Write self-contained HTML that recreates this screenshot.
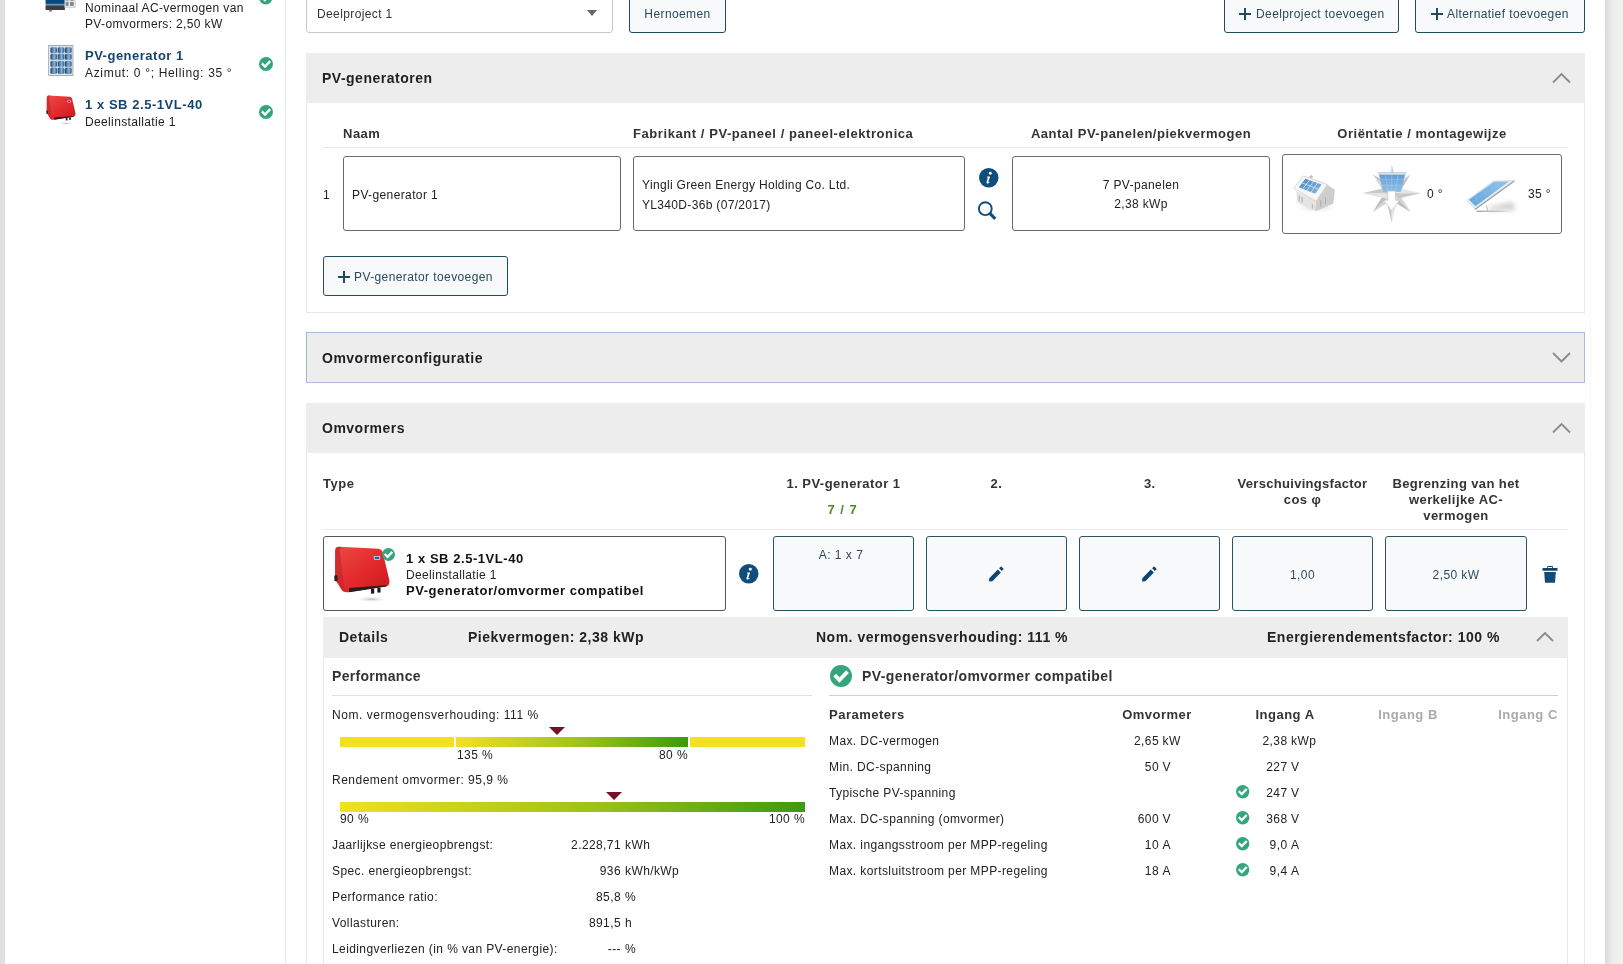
<!DOCTYPE html>
<html><head><meta charset="utf-8"><style>
html,body{margin:0;padding:0;width:1623px;height:964px;overflow:hidden;background:#fff;}
body{position:relative;font-family:"Liberation Sans", sans-serif;}
.t{position:absolute;white-space:nowrap;}
body{-webkit-font-smoothing:antialiased;}
#root{position:absolute;left:0;top:0;width:1623px;height:964px;will-change:transform;}
svg{overflow:visible}
</style></head><body><div id="root">
<div style="position:absolute;left:0px;top:0px;width:5px;height:964px;background:#e0e0e0"></div>
<div style="position:absolute;left:1605px;top:0px;width:18px;height:964px;background:linear-gradient(to right,#d9d9d9,#ececec 40%,#f3f3f3)"></div>
<div style="position:absolute;left:285px;top:0px;width:1px;height:964px;background:#e6e6e6"></div>
<div style="position:absolute;left:1590px;top:50px;width:1px;height:914px;background:#f8f8f8"></div>
<svg style="position:absolute;left:40px;top:0px;" width="40" height="20" viewBox="0 0 1623 812"><rect x="225" y="-200" width="785" height="360" fill="#044a85"/>
<rect x="225" y="160" width="785" height="50" fill="#7393b3"/>
<rect x="225" y="210" width="785" height="200" rx="25" fill="#3a3d41"/>
<rect x="370" y="400" width="110" height="70" fill="#7a7a7a"/>
<rect x="1010" y="-100" width="430" height="400" fill="#e6e9ec" stroke="#c4c8cc" stroke-width="25"/>
<rect x="1040" y="-60" width="120" height="90" fill="#8a96a2"/><rect x="1220" y="-60" width="150" height="90" fill="#8a8a8a"/>
<rect x="1040" y="80" width="120" height="160" fill="#7f8c99"/><rect x="1220" y="80" width="150" height="160" fill="#868686"/></svg>
<div class="t" style="left:85px;top:1.8000000000000007px;font-size:12px;line-height:12px;font-weight:normal;color:#222;letter-spacing:0.36px;">Nominaal AC-vermogen van</div>
<div class="t" style="left:85px;top:17.8px;font-size:12px;line-height:12px;font-weight:normal;color:#222;letter-spacing:0.36px;">PV-omvormers: 2,50 kW</div>
<svg style="position:absolute;left:258.75px;top:-9.25px;" width="13.5" height="13.5" viewBox="0 0 13.5 13.5"><circle cx="6.75" cy="6.75" r="6.75" fill="#35a57d"/><path d="M3.6450000000000005 7.0200000000000005 L5.805 9.180000000000001 L9.99 4.859999999999999" fill="none" stroke="#fff" stroke-width="2.30" stroke-linecap="square"/></svg>
<svg style="position:absolute;left:44px;top:42px;" width="34" height="38" viewBox="0 0 863 964"><defs><linearGradient id="pvg" x1="0" x2="1"><stop offset="0" stop-color="#1d3f66"/><stop offset="0.3" stop-color="#4f7fb0"/><stop offset="0.6" stop-color="#8fb2d4"/><stop offset="1" stop-color="#2a5585"/></linearGradient></defs><rect x="120" y="90" width="615" height="760" fill="#eef1f4" stroke="#9aa0a6" stroke-width="22"/><rect x="155" y="110" width="555" height="710" fill="#c9d6e2"/><rect x="165" y="130" width="165" height="150" rx="40" fill="url(#pvg)"/><rect x="350" y="130" width="165" height="150" rx="40" fill="url(#pvg)"/><rect x="530" y="130" width="170" height="150" rx="40" fill="url(#pvg)"/><rect x="165" y="300" width="165" height="150" rx="40" fill="url(#pvg)"/><rect x="350" y="300" width="165" height="150" rx="40" fill="url(#pvg)"/><rect x="530" y="300" width="170" height="150" rx="40" fill="url(#pvg)"/><rect x="165" y="480" width="165" height="150" rx="40" fill="url(#pvg)"/><rect x="350" y="480" width="165" height="150" rx="40" fill="url(#pvg)"/><rect x="530" y="480" width="170" height="150" rx="40" fill="url(#pvg)"/><rect x="165" y="650" width="165" height="160" rx="40" fill="url(#pvg)"/><rect x="350" y="650" width="165" height="160" rx="40" fill="url(#pvg)"/><rect x="530" y="650" width="170" height="160" rx="40" fill="url(#pvg)"/></svg>
<div class="t" style="left:85px;top:48.95px;font-size:13px;line-height:13px;font-weight:bold;color:#15446c;letter-spacing:0.5px;">PV-generator 1</div>
<div class="t" style="left:85px;top:66.8px;font-size:12px;line-height:12px;font-weight:normal;color:#222;letter-spacing:0.68px;">Azimut: 0 °; Helling: 35 °</div>
<svg style="position:absolute;left:258.5px;top:56.5px;" width="14" height="14" viewBox="0 0 14 14"><circle cx="7.0" cy="7.0" r="7.0" fill="#35a57d"/><path d="M3.7800000000000002 7.28 L6.02 9.520000000000001 L10.36 5.04" fill="none" stroke="#fff" stroke-width="2.38" stroke-linecap="square"/></svg>
<svg style="position:absolute;left:43px;top:92px;" width="38.160000000000004" height="36.04" viewBox="0 0 1021 964"><defs><linearGradient id="rgs" x1="0" x2="1" y1="0" y2="1"><stop offset="0" stop-color="#ee4a44"/><stop offset="0.6" stop-color="#e0262a"/><stop offset="1" stop-color="#c81a20"/></linearGradient>
<radialGradient id="shs"><stop offset="0" stop-color="#bbb"/><stop offset="1" stop-color="#fff" stop-opacity="0"/></radialGradient></defs>
<ellipse cx="620" cy="840" rx="240" ry="45" fill="url(#shs)"/>
<path d="M150 95 L720 125 Q760 128 775 170 L870 570 Q880 640 830 655 L280 740 Q215 748 190 700 L110 570 Q98 545 100 500 L102 150 Q105 95 150 95 Z" fill="url(#rgs)"/>
<path d="M102 150 Q105 95 150 95 L200 100 Q165 120 170 180 L240 720 Q205 740 190 700 L110 570 Q98 545 100 500 Z" fill="#c8262a" opacity="0.7"/>
<path d="M300 680 L820 640 L830 660 L300 740 Z" fill="#2c1c1c"/>
<rect x="610" y="690" width="45" height="70" fill="#1a1a1a"/><rect x="700" y="680" width="45" height="65" fill="#1a1a1a"/>
<rect x="90" y="500" width="45" height="85" rx="15" fill="#2a2020"/>
<rect x="650" y="225" width="90" height="55" rx="10" fill="#d8dcf0"/><rect x="662" y="238" width="66" height="30" rx="8" fill="#3d55a8"/></svg>
<div class="t" style="left:85px;top:97.95px;font-size:13px;line-height:13px;font-weight:bold;color:#15446c;letter-spacing:0.55px;">1 x SB 2.5-1VL-40</div>
<div class="t" style="left:85px;top:115.8px;font-size:12px;line-height:12px;font-weight:normal;color:#222;letter-spacing:0.36px;">Deelinstallatie 1</div>
<svg style="position:absolute;left:258.5px;top:105.0px;" width="14" height="14" viewBox="0 0 14 14"><circle cx="7.0" cy="7.0" r="7.0" fill="#35a57d"/><path d="M3.7800000000000002 7.28 L6.02 9.520000000000001 L10.36 5.04" fill="none" stroke="#fff" stroke-width="2.38" stroke-linecap="square"/></svg>
<div style="position:absolute;left:306px;top:-8px;width:307px;height:41px;box-sizing:border-box;border:1px solid #c9c9c9;border-radius:3px;background:#fff"></div>
<div class="t" style="left:317px;top:7.800000000000001px;font-size:12px;line-height:12px;font-weight:normal;color:#333;letter-spacing:0.38px;">Deelproject 1</div>
<svg style="position:absolute;left:587px;top:10px;" width="10" height="6" viewBox="0 0 10 6"><path d="M0 0 L10 0 L5 6 Z" fill="#666"/></svg>
<div style="position:absolute;left:629px;top:-8px;width:97px;height:41px;box-sizing:border-box;border:1px solid #1f4b5c;border-radius:3px;background:#f7f9fa"></div>
<div class="t" style="left:629.0px;width:97px;text-align:center;top:7.800000000000001px;font-size:12px;line-height:12px;font-weight:normal;color:#2c4a5a;letter-spacing:0.4px;">Hernoemen</div>
<div style="position:absolute;left:1224px;top:-8px;width:175px;height:41px;box-sizing:border-box;border:1px solid #1f4b5c;border-radius:3px;background:#f7f9fa"></div>
<svg style="position:absolute;left:1239px;top:8px;" width="12" height="12" viewBox="0 0 12 12"><path d="M6 0 V12 M0 6 H12" stroke="#1f4b5c" stroke-width="2"/></svg>
<div class="t" style="left:1256px;top:7.800000000000001px;font-size:12px;line-height:12px;font-weight:normal;color:#2c4a5a;letter-spacing:0.4px;">Deelproject toevoegen</div>
<div style="position:absolute;left:1415px;top:-8px;width:170px;height:41px;box-sizing:border-box;border:1px solid #1f4b5c;border-radius:3px;background:#f7f9fa"></div>
<svg style="position:absolute;left:1430.5px;top:8px;" width="12" height="12" viewBox="0 0 12 12"><path d="M6 0 V12 M0 6 H12" stroke="#1f4b5c" stroke-width="2"/></svg>
<div class="t" style="left:1447px;top:7.800000000000001px;font-size:12px;line-height:12px;font-weight:normal;color:#2c4a5a;letter-spacing:0.4px;">Alternatief toevoegen</div>
<div style="position:absolute;left:306px;top:53px;width:1279px;height:50px;background:#ededed"></div>
<div class="t" style="left:322px;top:71.1px;font-size:14px;line-height:14px;font-weight:bold;color:#222;letter-spacing:0.5px;">PV-generatoren</div>
<svg style="position:absolute;left:1552px;top:72.5px;" width="19" height="10.5" viewBox="0 0 19 10.5"><path d="M1 9.5 L9.5 1 L18 9.5" fill="none" stroke="#8a8a8a" stroke-width="1.8"/></svg>
<div style="position:absolute;left:306px;top:103px;width:1279px;height:210px;box-sizing:border-box;border:1px solid #e6e6e6;border-top:none"></div>
<div class="t" style="left:343px;top:126.95px;font-size:13px;line-height:13px;font-weight:bold;color:#333;letter-spacing:0.5px;">Naam</div>
<div class="t" style="left:633px;top:126.95px;font-size:13px;line-height:13px;font-weight:bold;color:#333;letter-spacing:0.57px;">Fabrikant / PV-paneel / paneel-elektronica</div>
<div class="t" style="left:991.0px;width:300px;text-align:center;top:126.95px;font-size:13px;line-height:13px;font-weight:bold;color:#333;letter-spacing:0.5px;">Aantal PV-panelen/piekvermogen</div>
<div class="t" style="left:1272.0px;width:300px;text-align:center;top:126.95px;font-size:13px;line-height:13px;font-weight:bold;color:#333;letter-spacing:0.5px;">Oriëntatie / montagewijze</div>
<div style="position:absolute;left:323px;top:147px;width:1245px;height:1px;background:#e8e8e8"></div>
<div class="t" style="left:323px;top:188.8px;font-size:12px;line-height:12px;font-weight:normal;color:#222;letter-spacing:0.38px;">1</div>
<div style="position:absolute;left:343px;top:156px;width:278px;height:75px;box-sizing:border-box;border:1px solid #6a6a6a;border-radius:3px;background:#fff"></div>
<div class="t" style="left:352px;top:188.8px;font-size:12px;line-height:12px;font-weight:normal;color:#222;letter-spacing:0.38px;">PV-generator 1</div>
<div style="position:absolute;left:633px;top:156px;width:332px;height:75px;box-sizing:border-box;border:1px solid #6a6a6a;border-radius:3px;background:#fff"></div>
<div class="t" style="left:642px;top:178.8px;font-size:12px;line-height:12px;font-weight:normal;color:#222;letter-spacing:0.33px;">Yingli Green Energy Holding Co. Ltd.</div>
<div class="t" style="left:642px;top:198.8px;font-size:12px;line-height:12px;font-weight:normal;color:#222;letter-spacing:0.33px;">YL340D-36b (07/2017)</div>
<svg style="position:absolute;left:978.55px;top:167.55px;" width="19.5" height="19.5" viewBox="0 0 20 20"><circle cx="10" cy="10" r="10" fill="#0f4d7d"/><circle cx="11.6" cy="5.4" r="1.5" fill="#fff"/><path d="M8.3 8.6 L11.4 8.6 L9.6 14.2 Q9.4 14.9 10.1 14.6 L10.9 14.2 L10.7 15.2 Q9.6 15.9 8.6 15.9 Q7.3 15.8 7.7 14.5 L9.1 9.8 L8.1 9.8 Z" fill="#fff"/></svg>
<svg style="position:absolute;left:976px;top:200px;" width="22" height="22" viewBox="0 0 22 22"><circle cx="9.3" cy="8.7" r="6.4" fill="none" stroke="#0f4d7d" stroke-width="1.9"/><path d="M13.6 13.2 L19.3 18.8" stroke="#0f4d7d" stroke-width="3.1" stroke-linecap="butt"/></svg>
<div style="position:absolute;left:1012px;top:156px;width:258px;height:75px;box-sizing:border-box;border:1px solid #6a6a6a;border-radius:3px;background:#fff"></div>
<div class="t" style="left:1016.0px;width:250px;text-align:center;top:178.8px;font-size:12px;line-height:12px;font-weight:normal;color:#222;letter-spacing:0.38px;">7 PV-panelen</div>
<div class="t" style="left:1016.0px;width:250px;text-align:center;top:197.8px;font-size:12px;line-height:12px;font-weight:normal;color:#222;letter-spacing:0.38px;">2,38 kWp</div>
<div style="position:absolute;left:1282px;top:154px;width:280px;height:80px;box-sizing:border-box;border:1px solid #6a6a6a;border-radius:3px;background:#fff"></div>
<svg style="position:absolute;left:1288px;top:160px;" width="152" height="68" viewBox="0 0 1623 726"><defs>
<radialGradient id="hsh"><stop offset="0" stop-color="#c8c8c8"/><stop offset="1" stop-color="#fff" stop-opacity="0"/></radialGradient>
<linearGradient id="pnl" x1="0" x2="1" y1="0" y2="1"><stop offset="0" stop-color="#4a88c4"/><stop offset="1" stop-color="#86b8e2"/></linearGradient>
<radialGradient id="stg"><stop offset="0" stop-color="#ffffff"/><stop offset="0.35" stop-color="#e8e8e8"/><stop offset="1" stop-color="#cfcfcf"/></radialGradient>
<linearGradient id="cpn" x1="0" x2="0" y1="0" y2="1"><stop offset="0" stop-color="#5d98d3"/><stop offset="1" stop-color="#8fc0ea"/></linearGradient>
</defs>
<ellipse cx="300" cy="500" rx="240" ry="75" fill="url(#hsh)"/>
<path d="M90 330 L300 440 L295 548 L95 455 Z" fill="#e4e4e4"/>
<path d="M300 440 L420 265 L500 318 L485 465 L295 548 Z" fill="#cdcdcd"/>
<path d="M120 380 V440 M150 395 V455 M260 470 V520 M350 430 V500 M400 400 V470" stroke="#a8a8a8" stroke-width="10"/>
<path d="M60 300 L165 170 L420 262 L300 440 Z" fill="#f7f7f7" stroke="#c8c8c8" stroke-width="8"/>
<path d="M115 290 L185 200 L360 262 L290 360 Z" fill="url(#pnl)"/>
<path d="M159 308 L229 216 M202 325 L272 231 M246 342 L316 246 M150 245 L325 311" stroke="#cfe3f5" stroke-width="9"/>
<path d="M225 175 L255 160 L270 185 L240 195 Z" fill="#bdbdbd"/>
</svg>
<svg style="position:absolute;left:1355px;top:160px;" width="75" height="68" viewBox="0 0 1063 964"><defs><linearGradient id="cpn" x1="0" x2="0" y1="0" y2="1"><stop offset="0" stop-color="#5b97d2"/><stop offset="1" stop-color="#8cbde8"/></linearGradient></defs><path d="M520 470 L509 375 L789 201 Z" fill="#d6d6d6"/><path d="M520 470 L615 481 L789 201 Z" fill="#bdbdbd"/><path d="M520 470 L425 481 L251 201 Z" fill="#d6d6d6"/><path d="M520 470 L531 375 L251 201 Z" fill="#bdbdbd"/><path d="M520 470 L531 565 L251 739 Z" fill="#d6d6d6"/><path d="M520 470 L425 459 L251 739 Z" fill="#bdbdbd"/><path d="M520 470 L615 459 L789 739 Z" fill="#d6d6d6"/><path d="M520 470 L509 565 L789 739 Z" fill="#bdbdbd"/><path d="M520 470 L440 400 L520 60 Z" fill="#e6e6e6"/><path d="M520 470 L600 400 L520 60 Z" fill="#c9c9c9"/><path d="M520 470 L590 390 L940 470 Z" fill="#e6e6e6"/><path d="M520 470 L590 550 L940 470 Z" fill="#c9c9c9"/><path d="M520 470 L600 540 L520 900 Z" fill="#e6e6e6"/><path d="M520 470 L440 540 L520 900 Z" fill="#c9c9c9"/><path d="M520 470 L450 550 L100 470 Z" fill="#e6e6e6"/><path d="M520 470 L450 390 L100 470 Z" fill="#c9c9c9"/>
<path d="M335 180 L715 180 L645 445 L405 445 Z" fill="url(#cpn)" stroke="#8fb0cf" stroke-width="10"/>
<rect x="337" y="178" width="376" height="30" fill="#dde3e8"/>
<path d="M430 215 L470 440 M520 215 V440 M610 215 L575 440 M355 280 H695 M380 360 H670" stroke="#acd0f0" stroke-width="7"/>
<path d="M465 440 L572 440 L572 570 L632 570 L520 720 L408 570 L465 570 Z" fill="#ffffff" stroke="#c4c4c4" stroke-width="10"/>
</svg>
<div class="t" style="left:1427px;top:187.8px;font-size:12px;line-height:12px;font-weight:normal;color:#222;letter-spacing:0.38px;">0 °</div>
<svg style="position:absolute;left:1460px;top:170px;" width="100" height="50" viewBox="0 0 1623 812"><defs>
<linearGradient id="tsh" x1="0" x2="1"><stop offset="0" stop-color="#9a9a9a"/><stop offset="0.6" stop-color="#c8c8c8"/><stop offset="1" stop-color="#ffffff" stop-opacity="0"/></linearGradient>
<linearGradient id="tpn" x1="0" x2="1" y1="1" y2="0"><stop offset="0" stop-color="#62a5dc"/><stop offset="1" stop-color="#8fc4ec"/></linearGradient>
<filter id="tbl" x="-50%" y="-50%" width="200%" height="200%"><feGaussianBlur stdDeviation="45"/></filter>
</defs>
<path d="M470 600 L860 520 L900 650 L470 650 Z" fill="#cfcfcf" filter="url(#tbl)"/>
<rect x="270" y="660" width="690" height="20" fill="url(#tsh)"/>
<path d="M420 570 Q450 610 445 668" fill="none" stroke="#aaa" stroke-width="12"/>
<path d="M240 640 L880 175" stroke="#9a9a9a" stroke-width="26"/>
<path d="M115 495 L545 180 L870 175 L240 630 Z" fill="#eef2f5" stroke="#b9c0c7" stroke-width="10"/>
<path d="M145 485 L555 192 L795 185 L250 590 Z" fill="url(#tpn)"/>
<path d="M200 520 L690 185 M320 560 L760 230 M250 430 L320 570 M380 330 L450 470 M500 250 L560 370" stroke="#a8d0f0" stroke-width="5" opacity="0.7"/>
</svg>
<div class="t" style="left:1528px;top:187.8px;font-size:12px;line-height:12px;font-weight:normal;color:#222;letter-spacing:0.38px;">35 °</div>
<div style="position:absolute;left:323px;top:256px;width:185px;height:40px;box-sizing:border-box;border:1px solid #1f4b5c;border-radius:3px;background:#f7f9fa"></div>
<svg style="position:absolute;left:338px;top:271px;" width="12" height="12" viewBox="0 0 12 12"><path d="M6 0 V12 M0 6 H12" stroke="#1f4b5c" stroke-width="2"/></svg>
<div class="t" style="left:354px;top:270.8px;font-size:12px;line-height:12px;font-weight:normal;color:#2c4a5a;letter-spacing:0.4px;">PV-generator toevoegen</div>
<div style="position:absolute;left:306px;top:332px;width:1279px;height:51px;box-sizing:border-box;border:1px solid #a9bde0;border-left-color:#a5b1c6;box-shadow:inset 1px 1px 0 #e9eef9;background:#ededed"></div>
<div class="t" style="left:322px;top:351.1px;font-size:14px;line-height:14px;font-weight:bold;color:#222;letter-spacing:0.5px;">Omvormerconfiguratie</div>
<svg style="position:absolute;left:1552px;top:352px;" width="19" height="10.5" viewBox="0 0 19 10.5"><path d="M1 1 L9.5 9.5 L18 1" fill="none" stroke="#8a8a8a" stroke-width="1.8"/></svg>
<div style="position:absolute;left:306px;top:403px;width:1279px;height:50px;background:#ededed"></div>
<div class="t" style="left:322px;top:421.1px;font-size:14px;line-height:14px;font-weight:bold;color:#222;letter-spacing:0.5px;">Omvormers</div>
<svg style="position:absolute;left:1552px;top:422.5px;" width="19" height="10.5" viewBox="0 0 19 10.5"><path d="M1 9.5 L9.5 1 L18 9.5" fill="none" stroke="#8a8a8a" stroke-width="1.8"/></svg>
<div style="position:absolute;left:306px;top:453px;width:1279px;height:547px;box-sizing:border-box;border:1px solid #e6e6e6;border-top:none"></div>
<div class="t" style="left:323px;top:476.95px;font-size:13px;line-height:13px;font-weight:bold;color:#333;letter-spacing:0.5px;">Type</div>
<div class="t" style="left:743.5px;width:200px;text-align:center;top:476.95px;font-size:13px;line-height:13px;font-weight:bold;color:#333;letter-spacing:0.46px;">1. PV-generator 1</div>
<div class="t" style="left:742.7px;width:200px;text-align:center;top:502.95px;font-size:13px;line-height:13px;font-weight:bold;color:#4a8f28;letter-spacing:1.0px;">7 / 7</div>
<div class="t" style="left:946.5px;width:100px;text-align:center;top:476.95px;font-size:13px;line-height:13px;font-weight:bold;color:#333;letter-spacing:0.5px;">2.</div>
<div class="t" style="left:1099.8px;width:100px;text-align:center;top:476.95px;font-size:13px;line-height:13px;font-weight:bold;color:#333;letter-spacing:0.5px;">3.</div>
<div class="t" style="left:1202.5px;width:200px;text-align:center;top:476.95px;font-size:13px;line-height:13px;font-weight:bold;color:#333;letter-spacing:0.29px;">Verschuivingsfactor</div>
<div class="t" style="left:1202.5px;width:200px;text-align:center;top:492.95px;font-size:13px;line-height:13px;font-weight:bold;color:#333;letter-spacing:0.4px;">cos φ</div>
<div class="t" style="left:1356.0px;width:200px;text-align:center;top:476.95px;font-size:13px;line-height:13px;font-weight:bold;color:#333;letter-spacing:0.4px;">Begrenzing van het</div>
<div class="t" style="left:1356.0px;width:200px;text-align:center;top:492.95px;font-size:13px;line-height:13px;font-weight:bold;color:#333;letter-spacing:0.4px;">werkelijke AC-</div>
<div class="t" style="left:1356.0px;width:200px;text-align:center;top:508.95px;font-size:13px;line-height:13px;font-weight:bold;color:#333;letter-spacing:0.4px;">vermogen</div>
<div style="position:absolute;left:323px;top:529px;width:1245px;height:1px;background:#e8e8e8"></div>
<div style="position:absolute;left:323px;top:536px;width:403px;height:75px;box-sizing:border-box;border:1px solid #555;border-radius:3px;background:#fff"></div>
<svg style="position:absolute;left:328px;top:540px;" width="72.0" height="68.0" viewBox="0 0 1021 964"><defs><linearGradient id="rgt" x1="0" x2="1" y1="0" y2="1"><stop offset="0" stop-color="#ee4a44"/><stop offset="0.6" stop-color="#e0262a"/><stop offset="1" stop-color="#c81a20"/></linearGradient>
<radialGradient id="sht"><stop offset="0" stop-color="#bbb"/><stop offset="1" stop-color="#fff" stop-opacity="0"/></radialGradient></defs>
<ellipse cx="620" cy="840" rx="240" ry="45" fill="url(#sht)"/>
<path d="M150 95 L720 125 Q760 128 775 170 L870 570 Q880 640 830 655 L280 740 Q215 748 190 700 L110 570 Q98 545 100 500 L102 150 Q105 95 150 95 Z" fill="url(#rgt)"/>
<path d="M102 150 Q105 95 150 95 L200 100 Q165 120 170 180 L240 720 Q205 740 190 700 L110 570 Q98 545 100 500 Z" fill="#c8262a" opacity="0.7"/>
<path d="M300 680 L820 640 L830 660 L300 740 Z" fill="#2c1c1c"/>
<rect x="610" y="690" width="45" height="70" fill="#1a1a1a"/><rect x="700" y="680" width="45" height="65" fill="#1a1a1a"/>
<rect x="90" y="500" width="45" height="85" rx="15" fill="#2a2020"/>
<rect x="650" y="225" width="90" height="55" rx="10" fill="#d8dcf0"/><rect x="662" y="238" width="66" height="30" rx="8" fill="#3d55a8"/></svg>
<svg style="position:absolute;left:381.8px;top:548.0px;" width="13" height="13" viewBox="0 0 13 13"><circle cx="6.5" cy="6.5" r="6.5" fill="#35a57d"/><path d="M3.5100000000000002 6.76 L5.59 8.84 L9.62 4.68" fill="none" stroke="#fff" stroke-width="2.21" stroke-linecap="square"/></svg>
<div class="t" style="left:406px;top:551.95px;font-size:13px;line-height:13px;font-weight:bold;color:#111;letter-spacing:0.55px;">1 x SB 2.5-1VL-40</div>
<div class="t" style="left:406px;top:568.8px;font-size:12px;line-height:12px;font-weight:normal;color:#222;letter-spacing:0.36px;">Deelinstallatie 1</div>
<div class="t" style="left:406px;top:583.95px;font-size:13px;line-height:13px;font-weight:bold;color:#111;letter-spacing:0.55px;">PV-generator/omvormer compatibel</div>
<svg style="position:absolute;left:739.25px;top:564.25px;" width="19.5" height="19.5" viewBox="0 0 20 20"><circle cx="10" cy="10" r="10" fill="#0f4d7d"/><circle cx="11.6" cy="5.4" r="1.5" fill="#fff"/><path d="M8.3 8.6 L11.4 8.6 L9.6 14.2 Q9.4 14.9 10.1 14.6 L10.9 14.2 L10.7 15.2 Q9.6 15.9 8.6 15.9 Q7.3 15.8 7.7 14.5 L9.1 9.8 L8.1 9.8 Z" fill="#fff"/></svg>
<div style="position:absolute;left:773px;top:536px;width:141px;height:75px;box-sizing:border-box;border:1px solid #2a5366;border-radius:3px;background:#f8f9fa"></div>
<div style="position:absolute;left:926px;top:536px;width:141px;height:75px;box-sizing:border-box;border:1px solid #2a5366;border-radius:3px;background:#f8f9fa"></div>
<div style="position:absolute;left:1079px;top:536px;width:141px;height:75px;box-sizing:border-box;border:1px solid #2a5366;border-radius:3px;background:#f8f9fa"></div>
<div style="position:absolute;left:1232px;top:536px;width:141px;height:75px;box-sizing:border-box;border:1px solid #2a5366;border-radius:3px;background:#f8f9fa"></div>
<div style="position:absolute;left:1385px;top:536px;width:142px;height:75px;box-sizing:border-box;border:1px solid #2a5366;border-radius:3px;background:#f8f9fa"></div>
<div class="t" style="left:771.0px;width:140px;text-align:center;top:548.8px;font-size:12px;line-height:12px;font-weight:normal;color:#2d4a63;letter-spacing:0.5px;">A: 1 x 7</div>
<svg style="position:absolute;left:985.0px;top:562px;" width="24" height="24" viewBox="0 0 24 24"><path d="M4 19.6 L4.3 16.3 L12.8 7.6 L15.9 10.6 L7.4 19.3 Z" fill="#0e4470"/><path d="M14.1 6.2 L15.6 4.7 Q16.1 4.3 16.6 4.7 L18.3 6.4 Q18.7 6.9 18.3 7.4 L16.8 8.9 Z" fill="#0e4470"/></svg>
<svg style="position:absolute;left:1137.8px;top:562px;" width="24" height="24" viewBox="0 0 24 24"><path d="M4 19.6 L4.3 16.3 L12.8 7.6 L15.9 10.6 L7.4 19.3 Z" fill="#0e4470"/><path d="M14.1 6.2 L15.6 4.7 Q16.1 4.3 16.6 4.7 L18.3 6.4 Q18.7 6.9 18.3 7.4 L16.8 8.9 Z" fill="#0e4470"/></svg>
<div class="t" style="left:1232.5px;width:140px;text-align:center;top:568.8px;font-size:12px;line-height:12px;font-weight:normal;color:#2d4d66;letter-spacing:0.4px;">1,00</div>
<div class="t" style="left:1386.0px;width:140px;text-align:center;top:568.8px;font-size:12px;line-height:12px;font-weight:normal;color:#2d4d66;letter-spacing:0.4px;">2,50 kW</div>
<svg style="position:absolute;left:1538px;top:562px;" width="24" height="26" viewBox="0 0 24 26"><path d="M4.5 6.2 Q4.5 5.9 5 5.9 L9.3 5.9 L9.3 4.7 Q9.3 4.1 9.9 4.1 L14.3 4.1 Q14.9 4.1 14.9 4.7 L14.9 5.9 L19.1 5.9 Q19.5 5.9 19.5 6.3 L19.5 8.4 Q19.5 8.8 19.1 8.8 L4.9 8.8 Q4.5 8.8 4.5 8.4 Z M10.1 5 L10.1 5.9 L14.1 5.9 L14.1 5 Z" fill="#0e4470" fill-rule="evenodd"/><path d="M6.2 10 L17.8 10 L17 20.8 L7 20.8 Z" fill="#0f4a7c"/></svg>
<div style="position:absolute;left:323px;top:617px;width:1245px;height:41px;background:#ededed"></div>
<div class="t" style="left:339px;top:630.1px;font-size:14px;line-height:14px;font-weight:bold;color:#222;letter-spacing:0.5px;">Details</div>
<div class="t" style="left:468px;top:630.1px;font-size:14px;line-height:14px;font-weight:bold;color:#222;letter-spacing:0.5px;">Piekvermogen: 2,38 kWp</div>
<div class="t" style="left:816px;top:630.1px;font-size:14px;line-height:14px;font-weight:bold;color:#222;letter-spacing:0.5px;">Nom. vermogensverhouding: 111 %</div>
<div class="t" style="left:1267px;top:630.1px;font-size:14px;line-height:14px;font-weight:bold;color:#222;letter-spacing:0.5px;">Energierendementsfactor: 100 %</div>
<svg style="position:absolute;left:1536px;top:632px;" width="18" height="10" viewBox="0 0 18 10"><path d="M1 9 L9.0 1 L17 9" fill="none" stroke="#8a8a8a" stroke-width="1.8"/></svg>
<div style="position:absolute;left:323px;top:658px;width:1245px;height:342px;box-sizing:border-box;border:1px solid #e6e6e6;border-top:none"></div>
<div class="t" style="left:332px;top:669.1px;font-size:14px;line-height:14px;font-weight:bold;color:#333;letter-spacing:0.3px;">Performance</div>
<div style="position:absolute;left:332px;top:695px;width:480px;height:1px;background:#e2e2e2"></div>
<div class="t" style="left:332px;top:708.8px;font-size:12px;line-height:12px;font-weight:normal;color:#222;letter-spacing:0.55px;">Nom. vermogensverhouding: 111 %</div>
<svg style="position:absolute;left:549px;top:727px;" width="16" height="8" viewBox="0 0 16 8"><path d="M0 0 L16 0 L8 8 Z" fill="#7a0f26"/></svg>
<div style="position:absolute;left:340px;top:737px;width:114px;height:10px;background:#f2e11c"></div>
<div style="position:absolute;left:456px;top:737px;width:232px;height:10px;background:linear-gradient(to right,#f2e11c,#9cc21a 55%,#3a9a12)"></div>
<div style="position:absolute;left:690px;top:737px;width:115px;height:10px;background:#f2e11c"></div>
<div class="t" style="left:457px;top:748.8px;font-size:12px;line-height:12px;font-weight:normal;color:#222;letter-spacing:0.4px;">135 %</div>
<div class="t" style="left:588px;width:100px;text-align:right;top:748.8px;font-size:12px;line-height:12px;font-weight:normal;color:#222;letter-spacing:0.4px;">80 %</div>
<div class="t" style="left:332px;top:773.8px;font-size:12px;line-height:12px;font-weight:normal;color:#222;letter-spacing:0.5px;">Rendement omvormer: 95,9 %</div>
<svg style="position:absolute;left:606px;top:792px;" width="16" height="8" viewBox="0 0 16 8"><path d="M0 0 L16 0 L8 8 Z" fill="#7a0f26"/></svg>
<div style="position:absolute;left:340px;top:802px;width:465px;height:10px;background:linear-gradient(to right,#f2e11c,#9cc21a 55%,#3a9a12)"></div>
<div class="t" style="left:340px;top:812.8px;font-size:12px;line-height:12px;font-weight:normal;color:#222;letter-spacing:0.4px;">90 %</div>
<div class="t" style="left:705px;width:100px;text-align:right;top:812.8px;font-size:12px;line-height:12px;font-weight:normal;color:#222;letter-spacing:0.4px;">100 %</div>
<div class="t" style="left:332px;top:838.8px;font-size:12px;line-height:12px;font-weight:normal;color:#222;letter-spacing:0.4px;">Jaarlijkse energieopbrengst:</div>
<div class="t" style="left:521px;width:100px;text-align:right;top:838.8px;font-size:12px;line-height:12px;font-weight:normal;color:#222;letter-spacing:0.4px;margin-right:-0.4px">2.228,71</div>
<div class="t" style="left:625px;top:838.8px;font-size:12px;line-height:12px;font-weight:normal;color:#222;letter-spacing:0.4px;">kWh</div>
<div class="t" style="left:332px;top:864.8px;font-size:12px;line-height:12px;font-weight:normal;color:#222;letter-spacing:0.4px;">Spec. energieopbrengst:</div>
<div class="t" style="left:521px;width:100px;text-align:right;top:864.8px;font-size:12px;line-height:12px;font-weight:normal;color:#222;letter-spacing:0.4px;margin-right:-0.4px">936</div>
<div class="t" style="left:625px;top:864.8px;font-size:12px;line-height:12px;font-weight:normal;color:#222;letter-spacing:0.4px;">kWh/kWp</div>
<div class="t" style="left:332px;top:890.8px;font-size:12px;line-height:12px;font-weight:normal;color:#222;letter-spacing:0.4px;">Performance ratio:</div>
<div class="t" style="left:521px;width:100px;text-align:right;top:890.8px;font-size:12px;line-height:12px;font-weight:normal;color:#222;letter-spacing:0.4px;margin-right:-0.4px">85,8</div>
<div class="t" style="left:625px;top:890.8px;font-size:12px;line-height:12px;font-weight:normal;color:#222;letter-spacing:0.4px;">%</div>
<div class="t" style="left:332px;top:916.8px;font-size:12px;line-height:12px;font-weight:normal;color:#222;letter-spacing:0.4px;">Vollasturen:</div>
<div class="t" style="left:521px;width:100px;text-align:right;top:916.8px;font-size:12px;line-height:12px;font-weight:normal;color:#222;letter-spacing:0.4px;margin-right:-0.4px">891,5</div>
<div class="t" style="left:625px;top:916.8px;font-size:12px;line-height:12px;font-weight:normal;color:#222;letter-spacing:0.4px;">h</div>
<div class="t" style="left:332px;top:942.8px;font-size:12px;line-height:12px;font-weight:normal;color:#222;letter-spacing:0.4px;">Leidingverliezen (in % van PV-energie):</div>
<div class="t" style="left:521px;width:100px;text-align:right;top:942.8px;font-size:12px;line-height:12px;font-weight:normal;color:#222;letter-spacing:0.4px;margin-right:-0.4px">---</div>
<div class="t" style="left:625px;top:942.8px;font-size:12px;line-height:12px;font-weight:normal;color:#222;letter-spacing:0.4px;">%</div>
<svg style="position:absolute;left:830.0px;top:665.0px;" width="22" height="22" viewBox="0 0 22 22"><circle cx="11.0" cy="11.0" r="11.0" fill="#35a57d"/><path d="M5.94 11.440000000000001 L9.459999999999999 14.96 L16.28 7.92" fill="none" stroke="#fff" stroke-width="3.74" stroke-linecap="square"/></svg>
<div class="t" style="left:862px;top:669.1px;font-size:14px;line-height:14px;font-weight:bold;color:#333;letter-spacing:0.42px;">PV-generator/omvormer compatibel</div>
<div style="position:absolute;left:829px;top:695px;width:729px;height:1px;background:#cfcfcf"></div>
<div class="t" style="left:829px;top:707.95px;font-size:13px;line-height:13px;font-weight:bold;color:#333;letter-spacing:0.5px;">Parameters</div>
<div class="t" style="left:1097.0px;width:120px;text-align:center;top:707.95px;font-size:13px;line-height:13px;font-weight:bold;color:#333;letter-spacing:0.5px;">Omvormer</div>
<div class="t" style="left:1225.0px;width:120px;text-align:center;top:707.95px;font-size:13px;line-height:13px;font-weight:bold;color:#333;letter-spacing:0.5px;">Ingang A</div>
<div class="t" style="left:1348.0px;width:120px;text-align:center;top:707.95px;font-size:13px;line-height:13px;font-weight:bold;color:#aaa;letter-spacing:0.5px;">Ingang B</div>
<div class="t" style="left:1468.0px;width:120px;text-align:center;top:707.95px;font-size:13px;line-height:13px;font-weight:bold;color:#aaa;letter-spacing:0.5px;">Ingang C</div>
<div class="t" style="left:829px;top:734.8px;font-size:12px;line-height:12px;font-weight:normal;color:#222;letter-spacing:0.4px;">Max. DC-vermogen</div>
<div class="t" style="left:1059px;width:100px;text-align:right;top:734.8px;font-size:12px;line-height:12px;font-weight:normal;color:#222;letter-spacing:0.4px;margin-right:-0.4px">2,65</div>
<div class="t" style="left:1162.5px;top:734.8px;font-size:12px;line-height:12px;font-weight:normal;color:#222;letter-spacing:0.4px;">kW</div>
<div class="t" style="left:1187.5px;width:100px;text-align:right;top:734.8px;font-size:12px;line-height:12px;font-weight:normal;color:#222;letter-spacing:0.4px;margin-right:-0.4px">2,38</div>
<div class="t" style="left:1291px;top:734.8px;font-size:12px;line-height:12px;font-weight:normal;color:#222;letter-spacing:0.4px;">kWp</div>
<div class="t" style="left:829px;top:760.8px;font-size:12px;line-height:12px;font-weight:normal;color:#222;letter-spacing:0.4px;">Min. DC-spanning</div>
<div class="t" style="left:1059px;width:100px;text-align:right;top:760.8px;font-size:12px;line-height:12px;font-weight:normal;color:#222;letter-spacing:0.4px;margin-right:-0.4px">50</div>
<div class="t" style="left:1162.5px;top:760.8px;font-size:12px;line-height:12px;font-weight:normal;color:#222;letter-spacing:0.4px;">V</div>
<div class="t" style="left:1187.5px;width:100px;text-align:right;top:760.8px;font-size:12px;line-height:12px;font-weight:normal;color:#222;letter-spacing:0.4px;margin-right:-0.4px">227</div>
<div class="t" style="left:1291px;top:760.8px;font-size:12px;line-height:12px;font-weight:normal;color:#222;letter-spacing:0.4px;">V</div>
<div class="t" style="left:829px;top:786.8px;font-size:12px;line-height:12px;font-weight:normal;color:#222;letter-spacing:0.4px;">Typische PV-spanning</div>
<div class="t" style="left:1187.5px;width:100px;text-align:right;top:786.8px;font-size:12px;line-height:12px;font-weight:normal;color:#222;letter-spacing:0.4px;margin-right:-0.4px">247</div>
<div class="t" style="left:1291px;top:786.8px;font-size:12px;line-height:12px;font-weight:normal;color:#222;letter-spacing:0.4px;">V</div>
<svg style="position:absolute;left:1235.6px;top:785.3px;" width="13.4" height="13.4" viewBox="0 0 13.4 13.4"><circle cx="6.7" cy="6.7" r="6.7" fill="#35a57d"/><path d="M3.6180000000000003 6.968000000000001 L5.7620000000000005 9.112 L9.916 4.824" fill="none" stroke="#fff" stroke-width="2.28" stroke-linecap="square"/></svg>
<div class="t" style="left:829px;top:812.8px;font-size:12px;line-height:12px;font-weight:normal;color:#222;letter-spacing:0.4px;">Max. DC-spanning (omvormer)</div>
<div class="t" style="left:1059px;width:100px;text-align:right;top:812.8px;font-size:12px;line-height:12px;font-weight:normal;color:#222;letter-spacing:0.4px;margin-right:-0.4px">600</div>
<div class="t" style="left:1162.5px;top:812.8px;font-size:12px;line-height:12px;font-weight:normal;color:#222;letter-spacing:0.4px;">V</div>
<div class="t" style="left:1187.5px;width:100px;text-align:right;top:812.8px;font-size:12px;line-height:12px;font-weight:normal;color:#222;letter-spacing:0.4px;margin-right:-0.4px">368</div>
<div class="t" style="left:1291px;top:812.8px;font-size:12px;line-height:12px;font-weight:normal;color:#222;letter-spacing:0.4px;">V</div>
<svg style="position:absolute;left:1235.6px;top:811.3px;" width="13.4" height="13.4" viewBox="0 0 13.4 13.4"><circle cx="6.7" cy="6.7" r="6.7" fill="#35a57d"/><path d="M3.6180000000000003 6.968000000000001 L5.7620000000000005 9.112 L9.916 4.824" fill="none" stroke="#fff" stroke-width="2.28" stroke-linecap="square"/></svg>
<div class="t" style="left:829px;top:838.8px;font-size:12px;line-height:12px;font-weight:normal;color:#222;letter-spacing:0.4px;">Max. ingangsstroom per MPP-regeling</div>
<div class="t" style="left:1059px;width:100px;text-align:right;top:838.8px;font-size:12px;line-height:12px;font-weight:normal;color:#222;letter-spacing:0.4px;margin-right:-0.4px">10</div>
<div class="t" style="left:1162.5px;top:838.8px;font-size:12px;line-height:12px;font-weight:normal;color:#222;letter-spacing:0.4px;">A</div>
<div class="t" style="left:1187.5px;width:100px;text-align:right;top:838.8px;font-size:12px;line-height:12px;font-weight:normal;color:#222;letter-spacing:0.4px;margin-right:-0.4px">9,0</div>
<div class="t" style="left:1291px;top:838.8px;font-size:12px;line-height:12px;font-weight:normal;color:#222;letter-spacing:0.4px;">A</div>
<svg style="position:absolute;left:1235.6px;top:837.3px;" width="13.4" height="13.4" viewBox="0 0 13.4 13.4"><circle cx="6.7" cy="6.7" r="6.7" fill="#35a57d"/><path d="M3.6180000000000003 6.968000000000001 L5.7620000000000005 9.112 L9.916 4.824" fill="none" stroke="#fff" stroke-width="2.28" stroke-linecap="square"/></svg>
<div class="t" style="left:829px;top:864.8px;font-size:12px;line-height:12px;font-weight:normal;color:#222;letter-spacing:0.4px;">Max. kortsluitstroom per MPP-regeling</div>
<div class="t" style="left:1059px;width:100px;text-align:right;top:864.8px;font-size:12px;line-height:12px;font-weight:normal;color:#222;letter-spacing:0.4px;margin-right:-0.4px">18</div>
<div class="t" style="left:1162.5px;top:864.8px;font-size:12px;line-height:12px;font-weight:normal;color:#222;letter-spacing:0.4px;">A</div>
<div class="t" style="left:1187.5px;width:100px;text-align:right;top:864.8px;font-size:12px;line-height:12px;font-weight:normal;color:#222;letter-spacing:0.4px;margin-right:-0.4px">9,4</div>
<div class="t" style="left:1291px;top:864.8px;font-size:12px;line-height:12px;font-weight:normal;color:#222;letter-spacing:0.4px;">A</div>
<svg style="position:absolute;left:1235.6px;top:863.3px;" width="13.4" height="13.4" viewBox="0 0 13.4 13.4"><circle cx="6.7" cy="6.7" r="6.7" fill="#35a57d"/><path d="M3.6180000000000003 6.968000000000001 L5.7620000000000005 9.112 L9.916 4.824" fill="none" stroke="#fff" stroke-width="2.28" stroke-linecap="square"/></svg>
</div></body></html>
